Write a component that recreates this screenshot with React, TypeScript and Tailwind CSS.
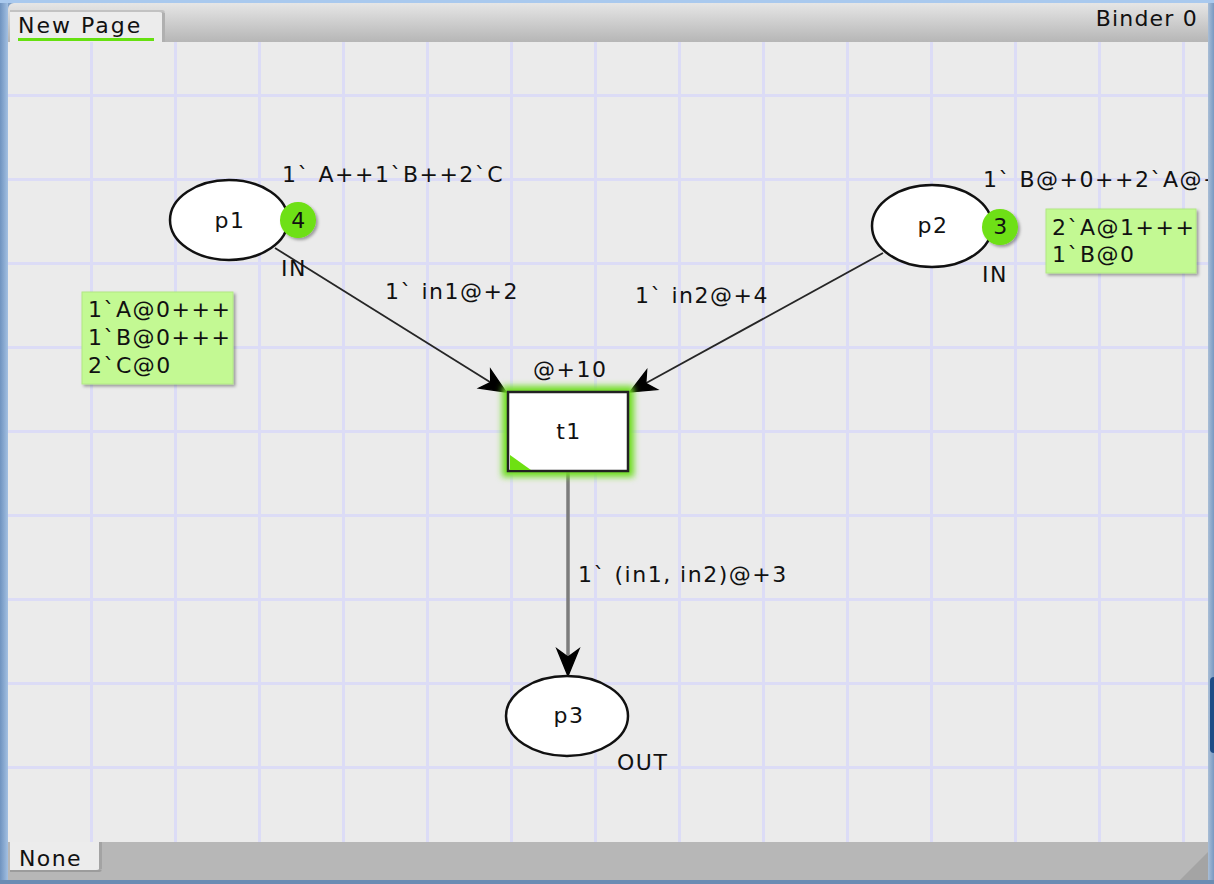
import React from "react";

type P = [number, number];

function arrowHead(tip: P, from: P, len = 25, half = 11, notch = 18) {
  const dx = tip[0] - from[0];
  const dy = tip[1] - from[1];
  const L = Math.hypot(dx, dy);
  const ux = dx / L;
  const uy = dy / L;
  const nx = -uy;
  const ny = ux;
  const bx = tip[0] - ux * len;
  const by = tip[1] - uy * len;
  const a: P = [bx + nx * half, by + ny * half];
  const b: P = [bx - nx * half, by - ny * half];
  const n: P = [tip[0] - ux * notch, tip[1] - uy * notch];
  return {
    points: `${tip[0]},${tip[1]} ${a[0]},${a[1]} ${n[0]},${n[1]} ${b[0]},${b[1]}`,
    notch: n,
  };
}

const vLines = Array.from({ length: 14 }, (_, i) => 90 + i * 84);
const hLines = Array.from({ length: 9 }, (_, i) => 94 + i * 84);

function Arc({ from, tip, stroke, width, len, half, notch }: { from: P; tip: P; stroke: string; width: number; len?: number; half?: number; notch?: number }) {
  const h = arrowHead(tip, from, len, half, notch);
  return (
    <g>
      <line x1={from[0]} y1={from[1]} x2={h.notch[0]} y2={h.notch[1]} stroke={stroke} strokeWidth={width} />
      <polygon points={h.points} fill="#000" stroke="#000" strokeWidth={1.4} strokeLinejoin="miter" />
    </g>
  );
}

function Canvas() {
  return (
    <svg width={1200} height={800} className="block font-['DejaVu_Sans',sans-serif] text-[22px] tracking-[1.5px]">
      <defs>
        <filter id="glow" x="-20%" y="-20%" width="140%" height="140%">
          <feGaussianBlur stdDeviation="3.2" />
        </filter>
        <filter id="shadow" x="-20%" y="-20%" width="150%" height="150%">
          <feDropShadow dx="2" dy="2" stdDeviation="1.6" floodColor="#000" floodOpacity="0.35" />
        </filter>
      </defs>
      <g transform="translate(-8,-42)">
        {vLines.map((x) => (
          <rect key={`v${x}`} x={x} y={42} width={3} height={800} fill="#dcdcf6" />
        ))}
        {hLines.map((y) => (
          <rect key={`h${y}`} x={8} y={y} width={1200} height={3} fill="#dcdcf6" />
        ))}

        {/* arcs */}
        <Arc from={[275, 248]} tip={[506, 392]} stroke="#262626" width={1.8} />
        <Arc from={[883, 253]} tip={[630, 392]} stroke="#262626" width={1.8} />
        <Arc from={[568, 471]} tip={[568, 676]} stroke="#7c7c7c" width={3.5} len={27} half={11} notch={19} />

        {/* p1 */}
        <ellipse cx={229} cy={220} rx={59} ry={40} fill="#fff" stroke="#111" strokeWidth={2.5} />
        <text x={230} y={228} textAnchor="middle" fill="#111">p1</text>
        <circle cx={298} cy={220} r={18} fill="#6ee012" filter="url(#shadow)" />
        <text x={299} y={228} textAnchor="middle" fill="#111">4</text>
        <text x={282} y={182} fill="#111">1` A++1`B++2`C</text>
        <text x={281} y={276} fill="#111">IN</text>
        <text x={385} y={299} fill="#111">1` in1@+2</text>

        <rect x={82} y={292} width={151} height={92} fill="#c3f993" stroke="#b2e884" strokeWidth={1} filter="url(#shadow)" />
        <text x={88} y={317} fill="#111">1`A@0+++</text>
        <text x={88} y={345} fill="#111">1`B@0+++</text>
        <text x={88} y={373} fill="#111">2`C@0</text>

        {/* p2 */}
        <ellipse cx={932} cy={226} rx={60} ry={41} fill="#fff" stroke="#111" strokeWidth={2.5} />
        <text x={933} y={233} textAnchor="middle" fill="#111">p2</text>
        <circle cx={1000} cy={227} r={18} fill="#6ee012" filter="url(#shadow)" />
        <text x={1001} y={234} textAnchor="middle" fill="#111">3</text>
        <text x={983} y={187} fill="#111">1` B@+0++2`A@+1</text>
        <text x={982} y={282} fill="#111">IN</text>
        <text x={635} y={303} fill="#111">1` in2@+4</text>

        <rect x={1046} y={209} width={150} height={64} fill="#c3f993" stroke="#b2e884" strokeWidth={1} filter="url(#shadow)" />
        <text x={1052} y={235} fill="#111">2`A@1+++</text>
        <text x={1052} y={262} fill="#111">1`B@0</text>

        {/* t1 */}
        <rect x={502} y={386} width={132} height={91} fill="#70de24" filter="url(#glow)" />
        <rect x={508} y={392} width={120} height={79} fill="#fff" stroke="#222" strokeWidth={2.5} />
        <polygon points="510,455 510,470 531,470" fill="#6ee012" />
        <text x={569} y={439} textAnchor="middle" fill="#111">t1</text>
        <text x={533} y={377} fill="#111">@+10</text>

        <text x={578} y={582} fill="#111">1` (in1, in2)@+3</text>

        {/* p3 */}
        <ellipse cx={567} cy={716} rx={61} ry={40} fill="#fff" stroke="#111" strokeWidth={2.5} />
        <text x={569} y={723} textAnchor="middle" fill="#111">p3</text>
        <text x={617} y={770} fill="#111">OUT</text>
      </g>
    </svg>
  );
}

export default function App() {
  return (
    <div className="w-[1214px] h-[884px] flex flex-col overflow-hidden bg-[#7f9fc6] font-['DejaVu_Sans',sans-serif] text-[#111]">
      <div className="h-[3px] bg-[#a9c9ee]" />
      <div className="flex flex-1">
        <div className="w-[8px] bg-gradient-to-r from-[#6f93bf] to-[#a3c0e2]" />
        <div className="w-[1200px] flex flex-col">
          {/* top tab bar */}
          <div className="h-[39px] flex items-end justify-between rounded-tl-[6px] bg-gradient-to-b from-[#e6e6e6] to-[#b6b6b6]">
            <div className="ml-[2px] w-[155px] h-[32px] bg-[#ececec] border-t-[2px] border-[#c2c2c2] rounded-tr-[3px] shadow-[inset_-3px_0_0_#b0b0b0] flex flex-col pl-[8px] pt-[4px]">
              <span className="text-[22px] leading-[20px] tracking-[2px] whitespace-nowrap">New Page</span>
              <div className="mt-[2px] w-[136px] h-[3px] bg-[#66e010]" />
            </div>
            <span className="self-start pt-[5px] pr-[10px] text-[22px] leading-[22px] tracking-[1.2px] whitespace-nowrap">Binder 0</span>
          </div>
          {/* canvas */}
          <div className="h-[800px] bg-[#ebebeb] overflow-hidden">
            <Canvas />
          </div>
          {/* bottom bar */}
          <div className="h-[38px] flex items-start justify-between bg-[#b7b7b7]">
            <div className="ml-[2px] w-[92px] h-[30px] bg-[#ececec] border-b-[2px] border-[#9c9c9c] shadow-[inset_-3px_0_0_#a3a3a3] rounded-br-[3px] pl-[9px] pt-[6px]">
              <span className="block text-[22px] leading-[22px] tracking-[1.4px]">None</span>
            </div>
            <svg width={28} height={28} className="self-end block">
              <polygon points="28,0 28,28 0,28" fill="#a4a4a4" />
            </svg>
          </div>
        </div>
        <div className="w-[6px] flex flex-col bg-gradient-to-r from-[#a9bed6] to-[#7899c2]">
          <div className="h-[674px] shrink-0" />
          <div className="h-[76px] ml-[2px] rounded-l-full bg-[#1e4c86]" />
        </div>
      </div>
      <div className="h-[4px] bg-[#6b8cb3]" />
    </div>
  );
}
